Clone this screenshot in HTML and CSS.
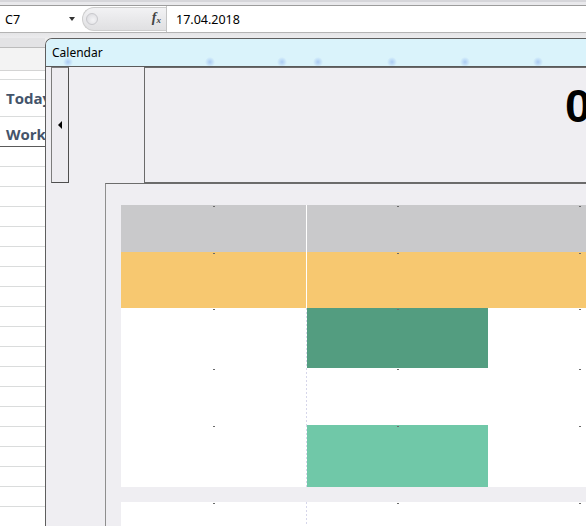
FILE: index.html
```html
<!DOCTYPE html>
<html>
<head>
<meta charset="utf-8">
<title>Calendar</title>
<link rel="stylesheet" href="styles.css">
</head>
<body>
<div class="app">
  <div class="topstrip"></div>
  <div class="formulabar">
    <div class="namebox"><span class="ref">C7</span><span class="dd"></span></div>
    <div class="pill"><span class="knob"></span><span class="fx">f<span class="fxs">x</span></span></div>
    <div class="field">17.04.2018</div>
  </div>
  <div class="barstrip"></div>
  <div class="main">
    <div class="sheet">
      <div class="sh-top"></div>
      <div class="sh-head"></div>
      <div class="sh-row r0"></div>
      <div class="sh-row today">Today</div>
      <div class="sh-row work">Work</div>
      <div class="sh-row"></div>
      <div class="sh-row"></div>
      <div class="sh-row"></div>
      <div class="sh-row"></div>
      <div class="sh-row"></div>
      <div class="sh-row"></div>
      <div class="sh-row"></div>
      <div class="sh-row"></div>
      <div class="sh-row"></div>
      <div class="sh-row"></div>
      <div class="sh-row"></div>
      <div class="sh-row"></div>
      <div class="sh-row"></div>
      <div class="sh-row"></div>
      <div class="sh-row"></div>
      <div class="sh-row"></div>
      <div class="sh-row"></div>
      <div class="sh-row"></div>
    </div>
    <div class="window">
      <div class="titlebar">Calendar</div>
      <div class="content">
        <div class="toprow">
          <div class="nav"><span class="arrow"></span></div>
          <div class="header"><span class="bignum">0</span></div>
        </div>
        <div class="lower">
          <div class="grid">
            <div class="cell gray"></div><div class="sep w"></div><div class="cell gray"></div><div class="cell gray"></div>
            <div class="cell orange"></div><div class="sep w"></div><div class="cell orange"></div><div class="cell orange"></div>
            <div class="cell white"></div><div class="sep d"></div><div class="cell dgreen"></div><div class="cell white"></div>
            <div class="cell white"></div><div class="sep d"></div><div class="cell white"></div><div class="cell white"></div>
            <div class="cell white"></div><div class="sep d"></div><div class="cell teal"></div><div class="cell white"></div>
            <div class="gaprow"></div>
            <div class="cell white"></div><div class="sep d"></div><div class="cell white"></div><div class="cell white"></div>
          </div>
        </div>
      </div>
    </div>
  </div>
</div>
</body>
</html>
```
FILE: styles.css
```css
* { box-sizing: border-box; }
html, body { margin: 0; padding: 0; }
body {
  width: 586px;
  height: 526px;
  overflow: hidden;
  background: #eeeeee;
  font-family: "Noto Sans", "Open Sans", sans-serif;
  color: #000;
}
.app {
  width: 586px;
  height: 526px;
  display: flex;
  flex-direction: column;
  overflow: hidden;
}
.topstrip {
  height: 6px;
  flex: none;
  background: #e9e9ec;
  border-top: 2px solid #d6d6da;
  border-bottom: 1px solid #9c9c9c;
}
.formulabar {
  height: 27px;
  flex: none;
  display: flex;
  background: #ffffff;
  border-bottom: 1px solid #b4b4b4;
}
.namebox {
  width: 82px;
  flex: none;
  display: flex;
  align-items: center;
  justify-content: space-between;
  padding: 0 7px 0 5px;
  font-size: 12.5px;
}
.dd {
  width: 0;
  height: 0;
  border-left: 3px solid transparent;
  border-right: 3px solid transparent;
  border-top: 4px solid #333;
}
.pill {
  width: 84px;
  flex: none;
  margin: 1px 0 1px 0;
  background: linear-gradient(#f2f2f4, #e0e0e2);
  border: 1px solid #cdcdcd;
  border-right: none;
  border-radius: 13px 0 0 13px;
  display: flex;
  align-items: center;
  justify-content: space-between;
  padding: 0 5px 0 3px;
}
.knob {
  width: 12px;
  height: 12px;
  border-radius: 50%;
  border: 1px solid #c8c8cc;
  background: radial-gradient(circle at 60% 60%, #f4f4f6, #d8d8dc);
}
.fx {
  font-family: "Liberation Serif", serif;
  font-style: italic;
  font-weight: bold;
  font-size: 14px;
  color: #444;
  line-height: 14px;
}
.fxs {
  font-size: 9px;
  vertical-align: -1px;
}
.field {
  flex: 1;
  border-left: 1px solid #c4c4c4;
  padding-left: 9px;
  display: flex;
  align-items: center;
  font-size: 12.5px;
}
.barstrip {
  height: 5px;
  flex: none;
  background: linear-gradient(#e4e4e6, #ececee);
}
.main {
  flex: 1;
  display: flex;
  overflow: hidden;
}
.sheet {
  width: 45px;
  flex: none;
  background: #ffffff;
  display: flex;
  flex-direction: column;
  overflow: hidden;
}
.sh-top {
  height: 10px;
  flex: none;
  background: #e3e3e5;
  border-bottom: 1px solid #bcbcbc;
}
.sh-head {
  height: 23px;
  flex: none;
  background: #f3f3f3;
  border-bottom: 1px solid #d4d4d4;
}
.sh-row {
  height: 20px;
  flex: none;
  border-bottom: 1px solid #dadcdc;
  display: flex;
  align-items: center;
  padding-left: 6px;
  white-space: nowrap;
  font-family: "Open Sans", "Noto Sans", sans-serif;
  font-weight: bold;
  font-size: 15px;
  color: #44546a;
}
.sh-row.r0 { height: 9px; }
.sh-row.today { height: 37px; }
.sh-row.work { height: 30px; border-bottom-color: #5a5a5a; padding-top: 4px; }
.window {
  width: 600px;
  flex: none;
  background: #efeef2;
  border-left: 1px solid #5e5e5e;
  border-top: 1px solid #5e5e5e;
  border-top-left-radius: 7px;
  display: flex;
  flex-direction: column;
}
.titlebar {
  height: 27px;
  flex: none;
  display: flex;
  align-items: center;
  padding-left: 6px;
  font-size: 12px;
  border-top-left-radius: 6px;
  background-color: #daf3fb;
  background-image:
    radial-gradient(circle at 22px 23px, rgba(150,185,240,0.7) 0, rgba(150,185,240,0) 5px),
    radial-gradient(circle at 164px 23px, rgba(150,185,240,0.7) 0, rgba(150,185,240,0) 5px),
    radial-gradient(circle at 236px 23px, rgba(150,185,240,0.7) 0, rgba(150,185,240,0) 5px),
    radial-gradient(circle at 272px 23px, rgba(150,185,240,0.7) 0, rgba(150,185,240,0) 5px),
    radial-gradient(circle at 346px 23px, rgba(150,185,240,0.7) 0, rgba(150,185,240,0) 5px),
    radial-gradient(circle at 419px 23px, rgba(150,185,240,0.7) 0, rgba(150,185,240,0) 5px),
    radial-gradient(circle at 492px 23px, rgba(150,185,240,0.7) 0, rgba(150,185,240,0) 5px);
}
.content {
  flex: 1;
  border-top: 1px solid #5a5a5a;
  padding-left: 5px;
  display: flex;
  flex-direction: column;
}
.toprow {
  height: 116px;
  flex: none;
  display: flex;
}
.nav {
  width: 18px;
  flex: none;
  border: 1px solid #7c7c7c;
  border-right-color: #4e4e4e;
  border-bottom-color: #4e4e4e;
  display: flex;
  align-items: center;
  justify-content: center;
  background: #edecf0;
}
.arrow {
  width: 0;
  height: 0;
  border-top: 4px solid transparent;
  border-bottom: 4px solid transparent;
  border-right: 4px solid #000;
}
.header {
  flex: 1;
  margin-left: 75px;
  border: 1px solid #6a6a6a;
  border-right: none;
  padding: 14px 0 0 420px;
  background: #efeef2;
}
.bignum {
  font-family: "Liberation Sans", Arial, sans-serif;
  font-weight: bold;
  font-size: 47px;
  line-height: 47px;
  display: block;
}
.lower {
  flex: 1;
  margin-left: 54px;
  border-top: 1px solid #6c6c6c;
  border-left: 1px solid #8e8e8e;
  padding: 21px 0 0 15px;
}
.grid {
  display: grid;
  grid-template-columns: 185px 1px 181px 183px;
  grid-template-rows: 47px 56px 60px 57px 62px 15px 60px;
}
.cell { position: relative; }
.cell::before {
  content: "";
  position: absolute;
  top: 1px;
  left: 50%;
  width: 2px;
  height: 1px;
  margin-left: -1px;
  background: #6a6a6a;
}
.gray { background: #c9c9cb; }
.orange { background: #f7c870; }
.white { background: #ffffff; }
.dgreen { background: #539d80; }
.teal { background: #70c8a8; }
.sep.w { background: #ffffff; }
.sep.d {
  background: repeating-linear-gradient(to bottom, #d6d6ea 0, #d6d6ea 2px, #ffffff 2px, #ffffff 4px);
}
.gaprow {
  grid-column: 1 / -1;
  background: #efeef2;
}
```
